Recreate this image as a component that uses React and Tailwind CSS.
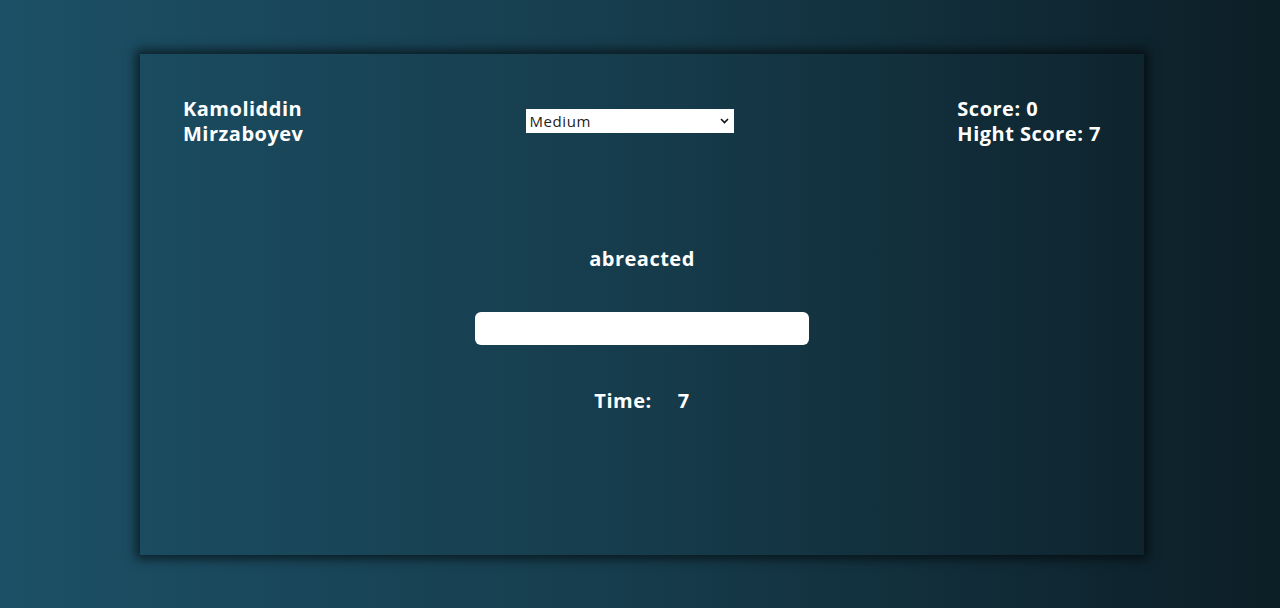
import React, { useState } from 'react';

const font = { fontFamily: '"Open Sans", "DejaVu Sans", sans-serif' };

export default function App() {
    const [level, setLevel] = useState('medium');
    const [value, setValue] = useState('');

    return (
        <div
            className="min-h-screen w-full bg-gradient-to-r from-[#1c5066] via-[#163c4c] to-[#0c1e26] pt-[54px] text-white"
            style={font}
        >
            {/* Game card */}
            <div className="ml-[140px] w-[1004px] h-[501px] shadow-[0_0_10px_4px_rgba(0,0,0,0.6)] flex flex-col">
                {/* Header */}
                <div className="flex items-center justify-between px-[43px] pt-[42px]">
                    <div className="text-[20px] font-bold leading-[25px] tracking-[0.5px]">
                        <div>Kamoliddin</div>
                        <div>Mirzaboyev</div>
                    </div>

                    <div className="relative w-[208px] h-[24px]">
                        <select
                            value={level}
                            onChange={(e) => setLevel(e.target.value)}
                            className="appearance-none w-full h-full bg-white text-[#222] text-[15px] tracking-[0.6px] pl-[3px] outline-none"
                            style={font}
                        >
                            <option value="easy">Easy</option>
                            <option value="medium">Medium</option>
                            <option value="hard">Hard</option>
                        </select>
                        <svg
                            className="absolute right-[5px] top-[9px] pointer-events-none"
                            width="9"
                            height="6"
                            viewBox="0 0 9 6"
                            fill="none"
                            stroke="#111"
                            strokeWidth="1.6"
                        >
                            <path d="M1 1l3.5 3.5L8 1" />
                        </svg>
                    </div>

                    <div className="text-[20px] font-bold leading-[25px] tracking-[0.5px]">
                        <div>Score: 0</div>
                        <div>Hight Score: 7</div>
                    </div>
                </div>

                {/* Word + input + timer */}
                <div className="flex flex-col items-center mt-[100px]">
                    <div className="text-[20px] font-bold leading-[25px] tracking-[0.5px]">abreacted</div>
                    <input
                        value={value}
                        onChange={(e) => setValue(e.target.value)}
                        className="mt-[41px] w-[334px] h-[33px] rounded-[6px] bg-white text-black px-3 outline-none"
                    />
                    <div className="mt-[43px] text-[20px] font-bold leading-[25px] tracking-[0.5px] flex gap-[26px]">
                        <span>Time:</span>
                        <span>7</span>
                    </div>
                </div>
            </div>
        </div>
    );
}
